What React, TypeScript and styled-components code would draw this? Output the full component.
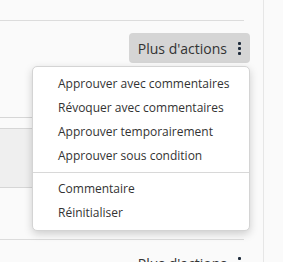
import styled, { createGlobalStyle } from "styled-components";

const GlobalStyle = createGlobalStyle`
  html, body {
    margin: 0;
    padding: 0;
    background: #fafafa;
    font-family: "Open Sans", "Liberation Sans", sans-serif;
    color: #333;
  }
`;

const Page = styled.div`
  display: flex;
  height: 262px;
  overflow: hidden;
`;

const Main = styled.div`
  width: 263px;
  border-right: 1px solid #e6e6e6;
  flex-shrink: 0;
`;

const Rule = styled.div<{ $top?: number }>`
  width: 244px;
  margin-top: ${(p) => p.$top ?? 0}px;
  border-top: 1px solid #dcdcdc;
`;

const ActionRow = styled.div<{ $top: number }>`
  position: relative;
  display: flex;
  justify-content: flex-end;
  padding: ${(p) => p.$top}px 13px 0 0;
`;

const MoreButton = styled.button<{ $plain?: boolean }>`
  display: flex;
  align-items: center;
  gap: 11px;
  height: 30px;
  padding: 0 9px 0 9px;
  border: 0;
  border-radius: 4px;
  background: ${(p) => (p.$plain ? "transparent" : "#d5d5d5")};
  color: #333;
  font-family: inherit;
  font-size: 14px;
  cursor: pointer;
`;

const Kebab = styled.span`
  display: flex;
  flex-direction: column;
  gap: 2px;
  i {
    width: 3px;
    height: 3px;
    background: #1f2c3c;
    border-radius: 1px;
  }
`;

const Menu = styled.div`
  position: absolute;
  top: 45px;
  right: 13px;
  width: 216px;
  padding: 5px 0 5px;
  background: #fff;
  border: 1px solid #d4d4d4;
  border-radius: 5px;
  box-shadow: 0 3px 8px rgba(0, 0, 0, 0.18);
  z-index: 2;
`;

const MenuItem = styled.div`
  height: 24px;
  line-height: 24px;
  padding-left: 25px;
  font-size: 12px;
  color: #333;
  white-space: nowrap;
`;

const MenuDivider = styled.div`
  margin: 4px 0;
  border-top: 1px solid #d8d8d8;
`;

const Panel = styled.div`
  width: 244px;
  margin-top: 54px;
  border-top: 1px solid #d6d6d6;
`;

const PanelBox = styled.div`
  height: 58px;
  margin-top: 10px;
  background: #efefef;
  border-top: 1px solid #d6d6d6;
  border-bottom: 1px solid #d6d6d6;
`;

export default function App() {
  return (
    <>
      <GlobalStyle />
      <Page>
        <Main>
          <Rule $top={20} />
          <ActionRow $top={12}>
            <MoreButton type="button">
              Plus d'actions
              <Kebab>
                <i />
                <i />
                <i />
              </Kebab>
            </MoreButton>
            <Menu>
              <MenuItem>Approuver avec commentaires</MenuItem>
              <MenuItem>Révoquer avec commentaires</MenuItem>
              <MenuItem>Approuver temporairement</MenuItem>
              <MenuItem>Approuver sous condition</MenuItem>
              <MenuDivider />
              <MenuItem>Commentaire</MenuItem>
              <MenuItem>Réinitialiser</MenuItem>
            </Menu>
          </ActionRow>
          <Panel>
            <PanelBox />
          </Panel>
          <Rule $top={51} />
          <ActionRow $top={8}>
            <MoreButton type="button" $plain>
              Plus d'actions
              <Kebab>
                <i />
                <i />
                <i />
              </Kebab>
            </MoreButton>
          </ActionRow>
        </Main>
      </Page>
    </>
  );
}
